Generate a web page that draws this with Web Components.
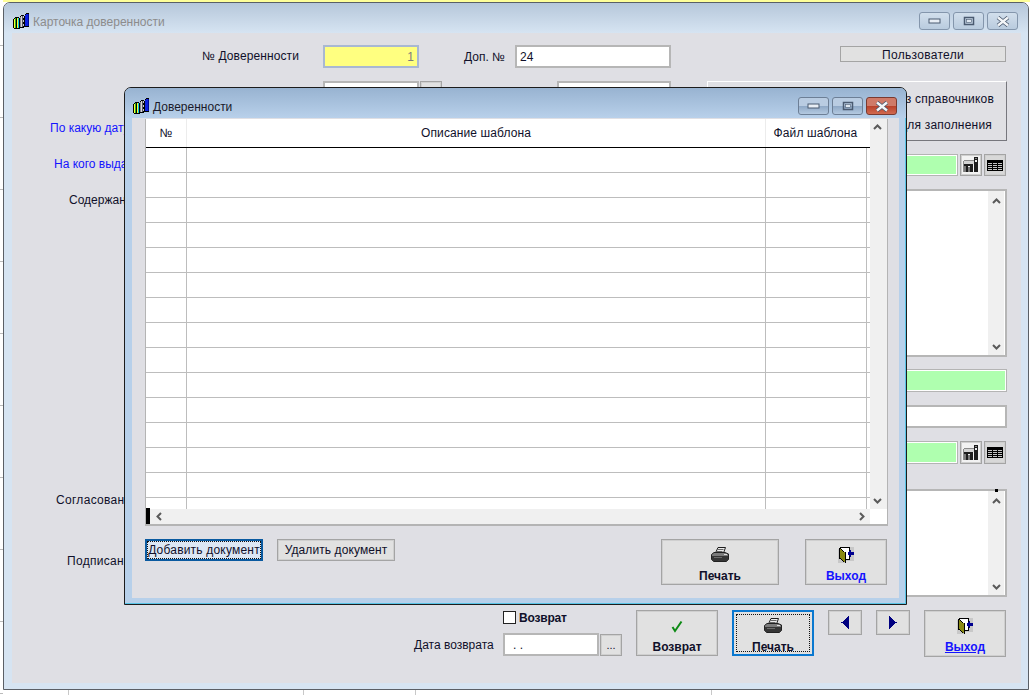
<!DOCTYPE html>
<html lang="ru">
<head>
<meta charset="utf-8">
<title>Карточка доверенности</title>
<style>
  html, body { margin: 0; height: 100%; }
  body {
    width: 1030px; height: 695px; overflow: hidden; position: relative;
    font: 12px "Liberation Sans", Arial, sans-serif; color: #10102a;
    background:
      linear-gradient(#ffff99 2px, transparent 2px),
      repeating-linear-gradient(90deg, transparent 0 68px, #c8c8c8 68px 69px, transparent 69px 303px, #c8c8c8 303px 304px, transparent 304px 415px, #c8c8c8 415px 416px, transparent 416px 711px, #c8c8c8 711px 712px, transparent 712px 1030px),
      #fff;
  }
  /* left strip of the sheet behind the window */
  .sheet-rows {
    position: absolute; left: 0; top: 0; width: 3px; height: 695px;
    background: repeating-linear-gradient(#fff 0 45px, #bbb 45px 46px, #fff 46px 72px);
  }
</style>
</head>
<body>
<div class="sheet-rows"></div>

<win-frame id="card" style="left:3px;top:2px;width:1026px;height:688px" caption="Карточка доверенности" inactive>
  <card-form></card-form>
</win-frame>

<win-frame id="dlg" style="left:124px;top:87px;width:783px;height:518px" caption="Доверенности" active>
  <templates-dialog></templates-dialog>
</win-frame>

<script>
const ICONS = {
  books: `<svg width="17" height="16" viewBox="0 0 17 16" shape-rendering="crispEdges">
    <path fill="#000" d="M0 6h1V5h1V4h4v1h1V3h1V2h3v1h1V1h1V0h3v14h-5v1H7v1H1v-1H0z"/>
    <path fill="#ffff30" d="M1 6h1v9H1zM4 5h1v10H4z"/>
    <path fill="#28b828" d="M2 5h1v10H2z"/><path fill="#00c8e0" d="M5 5h1v10H5z"/>
    <path fill="#8a8a94" d="M7 4h1v10H7z"/><path fill="#d8d8d8" d="M8 3h1v11H8z"/>
    <path fill="#55555f" d="M9 3h1v11H9z"/><path fill="#c8c8d0" d="M10 3h1v2h-1zM10 7h1v2h-1zM10 11h1v2h-1z"/>
    <path fill="#0c20e0" d="M12 2h1V1h3v12h-4z"/><path fill="#000a90" d="M15 1h1v12h-1z"/></svg>`,
  printer: `<svg width="18" height="15" viewBox="0 0 18 15">
    <path fill="#ececec" stroke="#1c1c1c" d="M7 .5h7.500l-2 5.500H4.500z"/>
    <path stroke="#666" d="M6.500 2.500h6M6 4.500h5.500"/>
    <path fill="#7c7c7c" stroke="#222" d="M3 5.500h11l3.500 1.500v5.500l-2 2H2.500l-2-2V7.500z"/>
    <rect x="1" y="9" width="16" height="5" fill="#363636"/>
    <rect x="3" y="10" width="8" height="1" fill="#6c6c6c"/>
    <rect x="13" y="7" width="3" height="1" fill="#e0e0e0"/></svg>`,
  door: `<svg width="16" height="16" viewBox="0 0 16 16" shape-rendering="crispEdges">
    <path fill="#c8c8c8" d="M0 2h3v11h13v1H8v2H0zM12 0h4v14h-4z"/>
    <path fill="#fff" d="M3 1h8v11H3z"/>
    <path fill="#000" d="M2 0h10v13H8v-1h3V1H3v1H2z"/>
    <path fill="#000" d="M1 1h1v1h2v1h1v1h1v1h2v11H7v-1H5v-1H4v-1H3v-1H1z"/>
    <path fill="#8a8a14" d="M2 2h1v1h1v1h1v1h2v10H6v-1H5v-1H4v-1H3v-1H2z"/>
    <path fill="#000090" d="M12 3h1v2h3v3h-3v2h-1V9h-1V8h-1V5h1V4h1z"/></svg>`,
  check: `<svg width="14" height="17" viewBox="0 0 14 17"><path fill="none" stroke="#0d8a14" stroke-width="2" d="M2.500 10l2.500 4l6.500-9.500"/></svg>`,
  left: `<svg width="8" height="13" viewBox="0 0 8 13" shape-rendering="crispEdges"><path fill="#000080" d="M7 0h1v13H7v-1H6v-1H5v-1H4V9H3V8H2V7H0V6h2V5h1V4h1V3h1V2h1V1h1z"/></svg>`,
  right: `<svg width="8" height="13" viewBox="0 0 8 13" shape-rendering="crispEdges"><path fill="#000080" d="M0 0h1v1h1v1h1v1h1v1h1v1h1v1h2v1H6v1H5v1H4v1H3v1H2v1H1v1H0z"/></svg>`,
  lookup: `<svg width="16" height="16" viewBox="0 0 16 16" shape-rendering="crispEdges">
    <path fill="#8a8a8a" d="M1 3h10v1H1zM0 4h1v11H0z"/><path fill="#d4d4d4" d="M1 4h10v3H1z"/>
    <path fill="#1e1e1e" d="M11 0h4v15h-4zM1 7h9v2H1zM3 9h2v6H3zM7 9h3v6H7z"/><path fill="#7a7a7a" d="M5 10h2v5H5zM1 9h2v6H1z"/>
    <path fill="#eee" d="M12 3h2v2h-2z"/><path fill="#888" d="M12 1h2v1h-2z"/></svg>`,
  grid: `<svg width="16" height="11" viewBox="0 0 16 11" shape-rendering="crispEdges">
    <path fill="#000" d="M0 0h16v11H0z"/>
    <path fill="#c4c4c4" d="M1 3h4v1H1zM6 3h4v1H6zM11 3h4v1h-4zM1 5h4v1H1zM6 5h4v1H6zM11 5h4v1h-4zM1 7h4v1H1zM6 7h4v1H6zM11 7h4v1h-4zM1 9h4v1H1zM6 9h4v1H6zM11 9h4v1h-4z"/></svg>`,
  chevUp: `<svg width="9" height="6" viewBox="0 0 9 6"><path fill="none" stroke="#5a5a5a" stroke-width="2" d="M1 5l3.500-3.500L8 5"/></svg>`,
  chevDown: `<svg width="9" height="6" viewBox="0 0 9 6"><path fill="none" stroke="#5a5a5a" stroke-width="2" d="M1 1l3.500 3.500L8 1"/></svg>`,
  chevLeft: `<svg width="6" height="9" viewBox="0 0 6 9"><path fill="none" stroke="#5a5a5a" stroke-width="2" d="M5 1L1.500 4.500L5 8"/></svg>`,
  chevRight: `<svg width="6" height="9" viewBox="0 0 6 9"><path fill="none" stroke="#5a5a5a" stroke-width="2" d="M1 1l3.500 3.500L1 8"/></svg>`
};

// caption-bar button; kind = min | max | close
const captionGlyph = {
  min: `<svg width="14" height="6" viewBox="0 0 14 6"><rect x="1" y="1" width="11" height="4" fill="#e8eef5" stroke="#4a5a70"/></svg>`,
  max: `<svg width="12" height="10" viewBox="0 0 12 10"><rect x="1.500" y="1.500" width="9" height="7" fill="none" stroke="#4a5a70" stroke-width="1.500"/><rect x="3.500" y="3.500" width="5" height="3" fill="#dfe7f0" stroke="#4a5a70" stroke-width=".6"/></svg>`,
  close: `<svg width="14" height="11" viewBox="0 0 14 11"><path d="M2 1.500L12 9.500M12 1.500L2 9.500" stroke="#47566c" stroke-width="4"/><path d="M2 1.500L12 9.500M12 1.500L2 9.500" stroke="#f4f6f8" stroke-width="2.400"/></svg>`
};

class WinFrame extends HTMLElement {
  connectedCallback() {
    const active = this.hasAttribute('active');
    this.attachShadow({ mode: 'open' });
    this.shadowRoot.innerHTML = `
      <style>
        :host {
          position: absolute; display: flex; flex-direction: column; box-sizing: border-box;
          border-radius: 7px 7px 0 0;
          border: 1px solid ${active ? '#1c1c1c' : '#5a5f66'};
          background: ${active ? '#b7d0ea' : '#d6e4f2'};
          ${active ? 'box-shadow: inset -1px -1px 0 #58c4e6;' : ''}
        }
        .bar {
          flex: none; display: flex; align-items: center; box-sizing: border-box;
          height: 30px;
          padding: 6px ${active ? 9 : 10}px 0 ${active ? 8 : 9}px;
          border-radius: 6px 6px 0 0;
          background: linear-gradient(${active ? '#98b3d1, #b8d0ea' : '#b6c7da, #d6e4f2'});
        }
        .ttl {
          margin: 2px 0 0 3px; font-size: 12px;
          color: ${active ? '#1a1a2a' : '#8c8c8c'};
          flex: 1;
        }
        .btn {
          width: 31px; height: 18px; box-sizing: border-box; margin-left: 3px;
          border: 1px solid ${active ? '#6d7f96' : '#8496ac'}; border-radius: 3px;
          display: flex; align-items: center; justify-content: center;
          background: ${active ? 'linear-gradient(#b9cce2 0 50%, #8ea8c6 50%, #b4c9e0)' : 'linear-gradient(#d2dfec, #b9cbde)'};
        }
        .btn.close {
          background: ${active ? 'linear-gradient(#cf7a68 0 50%, #b8402a 50%, #d16a50)' : 'linear-gradient(#d2dfec, #b9cbde)'};
          border-color: ${active ? '#7a3a30' : '#8496ac'};
        }
        .body {
          flex: 1; min-height: 0; position: relative;
          margin: 0 7px 6px ${active ? 7 : 8}px; background: #dfdfe4;
        }
      </style>
      <div class="bar">
        ${ICONS.books}
        <span class="ttl">${this.getAttribute('caption')}</span>
        <span class="btn">${captionGlyph.min}</span>
        <span class="btn">${captionGlyph.max}</span>
        <span class="btn close">${captionGlyph.close}</span>
      </div>
      <div class="body"><slot></slot></div>`;
  }
}
customElements.define('win-frame', WinFrame);

// flat grey push button used all over the form; text comes through the slot
class FlatButton extends HTMLElement {
  connectedCallback() {
    this.attachShadow({ mode: 'open' });
    const icon = this.getAttribute('icon');
    const focused = this.hasAttribute('focus-btn') || this.hasAttribute('focus-dlg');
    this.shadowRoot.innerHTML = `
      <style>
        :host {
          display: flex; box-sizing: border-box; flex-direction: column; flex: none;
          align-items: center; justify-content: center;
          border: 1px solid #a4a4a4; box-shadow: inset 0 0 0 1px #cfcfcf; background: #e1e1e1;
          color: #10102a; white-space: nowrap;
        }
        :host([tall]) { justify-content: flex-start; padding-top: 6px; font-weight: bold; }
        :host([tall]) .ic { height: 17px; margin-bottom: 6px; }
        :host([focus-btn]) { border: 2px solid #0a78d0; box-shadow: none; padding-top: 5px; position: relative; }
        :host([focus-dlg]) { border: 2px solid #0a5aa0; box-shadow: none; background: #dde7f4; position: relative; }
        .ic { display: flex; align-items: center; justify-content: center; }
        .focus {
          position: absolute; inset: 2px; border: 1px dotted #111; pointer-events: none;
        }
        :host([focus-dlg]) .focus { inset: 0; }
      </style>
      ${icon ? `<span class="ic">${ICONS[icon]}</span>` : ''}
      <slot></slot>
      ${focused ? '<span class="focus"></span>' : ''}`;
  }
}
customElements.define('flat-button', FlatButton);

// one line edit box
class TextField extends HTMLElement {
  connectedCallback() {
    this.attachShadow({ mode: 'open' });
    this.shadowRoot.innerHTML = `
      <style>
        :host {
          display: flex; align-items: center; box-sizing: border-box; flex: none;
          height: 23px; padding: 0 3px; background: #fff;
          border: 2px solid #b6b6b6; color: #10102a; overflow: hidden; white-space: nowrap;
        }
        :host([tone="yellow"]) {
          background: #ffff80; border-color: #a9b8d2; justify-content: flex-end; color: #7c7c7c;
        }
        :host([tone="green"]) { background: #afffaf; border-color: #fff; outline: 1px solid #b4b4b4; outline-offset: -1px; }
      </style><slot></slot>`;
  }
}
customElements.define('text-field', TextField);

// multiline box with only its vertical scroll strip showing
class MemoBox extends HTMLElement {
  connectedCallback() {
    this.attachShadow({ mode: 'open' });
    this.shadowRoot.innerHTML = `
      <style>
        :host {
          display: flex; justify-content: flex-end; box-sizing: border-box; flex: none;
          background: #fff; border: 2px solid #b6b6b6; position: relative;
        }
        .strip {
          width: 16px; margin-right: 1px; background: #f0f0f0; display: flex; flex-direction: column;
          justify-content: space-between; align-items: center; padding: 7px 0 5px; box-sizing: border-box;
        }
        .dot { position: absolute; right: 7px; top: -2px; width: 3px; height: 3px; background: #000; display: none; }
        :host([dot]) .dot { display: block; }
        svg { display: block; }
      </style>
      <div class="strip">${ICONS.chevUp}${ICONS.chevDown}</div><span class="dot"></span>`;
  }
}
customElements.define('memo-box', MemoBox);

class CardForm extends HTMLElement {
  connectedCallback() {
    this.attachShadow({ mode: 'open' });
    this.shadowRoot.innerHTML = `
      <style>
        :host { display: flex; flex-direction: column; height: 100%; padding-top: 12px; box-sizing: border-box; }
        .main { display: flex; height: 552px; }
        .labels { width: 311px; flex: none; position: relative; }
        .labels div { white-space: nowrap; height: 14px; line-height: 14px; }
        .blue { color: #1414ff; }
        .wide { letter-spacing: .3px; }
        .mid { width: 384px; flex: none; }
        .mid .row { display: flex; gap: 1px; }
        .side { width: 300px; flex: none; display: flex; flex-direction: column; }
        .side .users { align-self: flex-end; width: 166px; height: 16px; margin: 1px 1px 0 0; padding-top: 1px; letter-spacing: .3px; box-shadow: none; }
        .panel {
          box-sizing: border-box; height: 60px; margin-top: 19px; padding: 10px 12px 0 0;
          background: #e0e0e4; border: 1px solid; border-color: #fff #77777d #77777d #fff;
          display: flex; flex-direction: column; gap: 12px; text-align: right; line-height: 14px;
          letter-spacing: .2px;
        }
        .lookup { display: flex; gap: 2px; align-items: center; justify-content: flex-end; margin-right: 1px; }
        .lookup flat-button { width: 22px; height: 23px; }
        .lookup text-field { flex: 1; }
        .lookup flat-button:first-of-type { background: #f2f2f2; }
        .lookup flat-button:last-of-type { background: #d8d8d8; }
        .short text-field, .short flat-button { height: 22px; }
        .bottom { display: flex; flex: none; margin-top: 13px; }
        .ret { width: 222px; margin-left: 402px; flex: none; position: relative; display: flex; flex-direction: column; }
        .chk { display: flex; align-items: center; gap: 3px; margin-left: 89px; font-weight: bold; height: 13px; margin-top: 1px; letter-spacing: -.2px; }
        .box { width: 13px; height: 13px; box-sizing: border-box; border: 1px solid #222; background: #fff; flex: none; }
        .date { display: flex; align-items: center; margin-top: 9px; }
        .date > span { width: 89px; }
      </style>
      <div class="main">
        <div class="labels">
          <div style="margin:4px 0 0 190px;letter-spacing:.1px">№ Доверенности</div>
          <div class="blue" style="margin:58px 0 0 38px">По какую дату</div>
          <div class="blue" style="margin:22px 0 0 42px">На кого выдана доверенность</div>
          <div style="margin:22px 0 0 57px">Содержание</div>
          <div class="wide" style="margin:286px 0 0 44px">Согласовано с</div>
          <div class="wide" style="margin:47px 0 0 55px">Подписано</div>
        </div>
        <div class="mid">
          <div class="row">
            <text-field tone="yellow" style="width:96px">1</text-field>
            <span style="width:45px;margin-left:44px;align-self:center;white-space:nowrap">Доп. №</span>
            <text-field style="width:156px;margin-left:5px">24</text-field>
          </div>
          <div class="row" style="margin-top:13px">
            <text-field style="width:96px"></text-field>
            <flat-button style="width:22px;height:22px">…</flat-button>
            <text-field style="width:114px;margin-left:114px"></text-field>
          </div>
        </div>
        <div class="side">
          <flat-button class="users">Пользователи</flat-button>
          <div class="panel"><div>Выбор из справочников</div><div style="margin-right:2px">Данные для заполнения</div></div>
          <div class="lookup short" style="margin-top:13px">
            <text-field tone="green"></text-field>
            <flat-button icon="lookup"></flat-button><flat-button icon="grid"></flat-button>
          </div>
          <memo-box style="height:168px;margin-top:13px"></memo-box>
          <text-field tone="green" style="margin-top:12px"></text-field>
          <text-field style="margin-top:13px"></text-field>
          <div class="lookup" style="margin-top:13px">
            <text-field tone="green"></text-field>
            <flat-button icon="lookup"></flat-button><flat-button icon="grid"></flat-button>
          </div>
          <memo-box dot style="height:108px;margin-top:25px"></memo-box>
        </div>
      </div>
      <div class="bottom">
        <div class="ret">
          <div class="chk"><span class="box"></span>Возврат</div>
          <div class="date"><span>Дата возврата</span>
            <text-field style="width:96px"><span style="margin-left:5px">. .</span></text-field>
            <flat-button style="width:22px;height:22px;margin-left:1px;font-size:11px">...</flat-button>
          </div>
        </div>
        <flat-button tall icon="check" style="width:82px;height:46px">Возврат</flat-button>
        <flat-button tall focus-btn icon="printer" style="width:82px;height:46px;margin-left:14px">Печать</flat-button>
        <flat-button icon="left" style="width:34px;height:25px;margin-left:14px"></flat-button>
        <flat-button icon="right" style="width:34px;height:25px;margin-left:14px"></flat-button>
        <flat-button tall icon="door" style="width:82px;height:47px;margin-left:14px;color:#1414ff;text-decoration:underline">Выход</flat-button>
      </div>`;
  }
}
customElements.define('card-form', CardForm);

class TemplatesGrid extends HTMLElement {
  connectedCallback() {
    this.attachShadow({ mode: 'open' });
    let rows = '';
    for (let i = 0; i < 15; i++) rows += '<div class="tr"><i></i><i></i><i></i></div>';
    this.shadowRoot.innerHTML = `
      <style>
        :host {
          display: grid; box-sizing: border-box; width: 743px; height: 407px; flex: none;
          grid-template-columns: 1fr 17px; grid-template-rows: 1fr 15px;
          background: #fff; border: solid #b4b4b4; border-width: 0 1px 2px 1px;
        }
        .table { overflow: hidden; }
        .head, .tr { display: grid; grid-template-columns: 41px 579px 101px; }
        .head { height: 28px; border-bottom: 1px solid #000; text-align: center; line-height: 28px; letter-spacing: .1px; }
        .head span:not(:last-child) { border-right: 1px solid #ececec; }
        .head span:last-child { padding-right: 2px; }
        .tr { height: 24px; border-bottom: 1px solid #bdbdbd; }
        .tr i { border-right: 1px solid #bdbdbd; }
        .vs, .hs { background: #f0f0f0; display: flex; align-items: center; justify-content: space-between; }
        .vs { flex-direction: column; padding: 5px 3px 5px 0; box-sizing: border-box; }
        .hs { padding: 0 5px; position: relative; box-sizing: border-box; }
        .hs b { position: absolute; left: 0; top: -1px; width: 4px; height: 16px; background: #000; }
        .hs svg:first-of-type { margin-left: 5px; }
        svg { display: block; }
      </style>
      <div class="table">
        <div class="head"><span>№</span><span>Описание шаблона</span><span>Файл шаблона</span></div>
        ${rows}
      </div>
      <div class="vs">${ICONS.chevUp}${ICONS.chevDown}</div>
      <div class="hs"><b></b>${ICONS.chevLeft}${ICONS.chevRight}</div>`;
  }
}
customElements.define('templates-grid', TemplatesGrid);

class TemplatesDialog extends HTMLElement {
  connectedCallback() {
    this.attachShadow({ mode: 'open' });
    this.shadowRoot.innerHTML = `
      <style>
        :host { display: flex; flex-direction: column; padding: 1px 0 0 13px; box-sizing: border-box; height: 100%; }
        .actions { display: flex; margin-top: 13px; align-items: flex-start; }
        .sm { width: 118px; height: 22px; letter-spacing: .2px; }
      </style>
      <templates-grid></templates-grid>
      <div class="actions">
        <flat-button class="sm" focus-dlg>Добавить документ</flat-button>
        <flat-button class="sm" style="margin-left:14px;letter-spacing:.1px">Удалить документ</flat-button>
        <flat-button tall icon="printer" style="width:118px;height:46px;margin-left:266px">Печать</flat-button>
        <flat-button tall icon="door" style="width:82px;height:46px;margin-left:26px;color:#1414ff">Выход</flat-button>
      </div>`;
  }
}
customElements.define('templates-dialog', TemplatesDialog);
</script>
</body>
</html>
